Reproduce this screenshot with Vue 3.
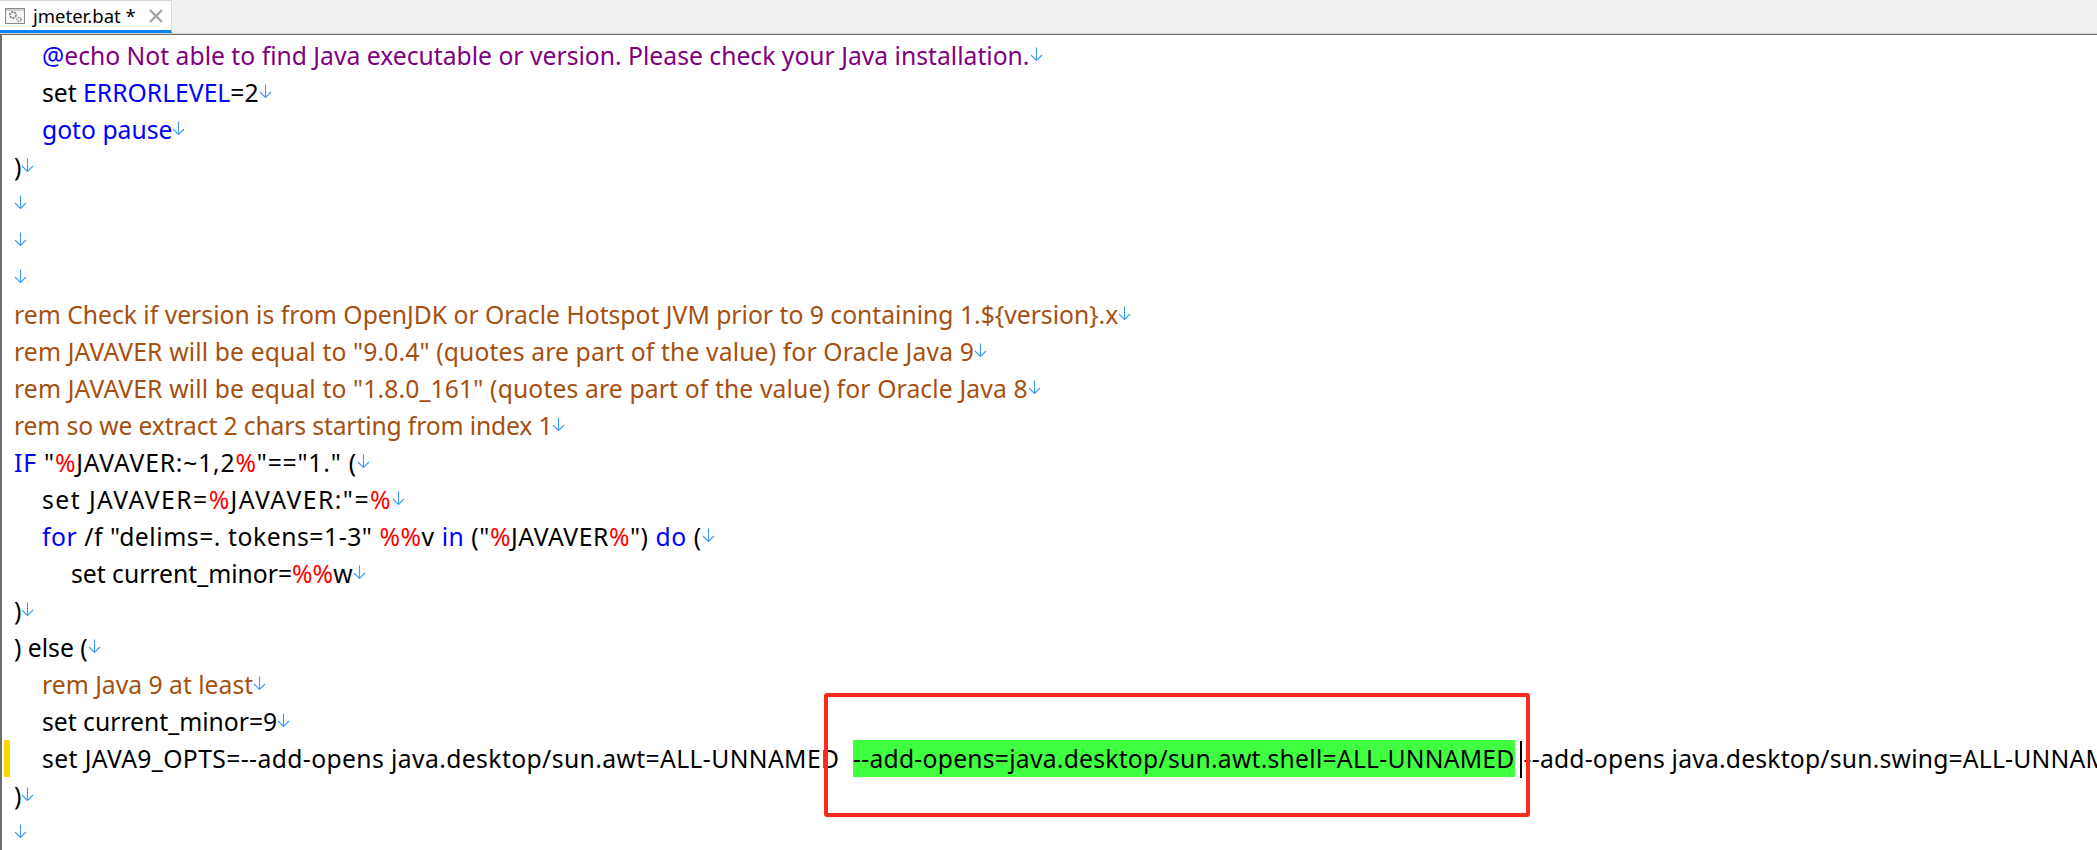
<script setup>
const lines = [
  { i: 1, s: [['@', 'k'], ['echo Not able to find Java executable or version. Please check your Java installation.', 'e']] },
  { i: 1, s: [['set ', 't'], ['ERRORLEVEL', 'k'], ['=2', 't']] },
  { i: 1, s: [['goto pause', 'k']] },
  { i: 0, s: [[')', 't']] },
  { i: 0, s: [] },
  { i: 0, s: [] },
  { i: 0, s: [] },
  { i: 0, s: [['rem Check if version is from OpenJDK or Oracle Hotspot JVM prior to 9 containing 1.${version}.x', 'c']] },
  { i: 0, cls: 'wide-rem', s: [['rem JAVAVER will be equal to "9.0.4" (quotes are part of the value) for Oracle Java 9', 'c']] },
  { i: 0, cls: 'wide-rem', s: [['rem JAVAVER will be equal to "1.8.0_161" (quotes are part of the value) for Oracle Java 8', 'c']] },
  { i: 0, cls: 'tight-rem', s: [['rem so we extract 2 chars starting from index 1', 'c']] },
  { i: 0, cls: 'wide-cond', s: [['IF', 'k'], [' "', 't'], ['%', 'v'], ['JAVAVER:~1,2', 't'], ['%', 'v'], ['"=="1." (', 't']] },
  { i: 1, cls: 'wide-set', s: [['set JAVAVER=', 't'], ['%', 'v'], ['JAVAVER:"=', 't'], ['%', 'v']] },
  { i: 1, cls: 'wide-for', s: [['for', 'k'], [' /f "delims=. tokens=1-3" ', 't'], ['%%', 'v'], ['v ', 't'], ['in', 'k'], [' ("', 't'], ['%', 'v'], ['JAVAVER', 't'], ['%', 'v'], ['") ', 't'], ['do', 'k'], [' (', 't']] },
  { i: 2, s: [['set current_minor=', 't'], ['%%', 'v'], ['w', 't']] },
  { i: 0, s: [[')', 't']] },
  { i: 0, s: [[') else (', 't']] },
  { i: 1, s: [['rem Java 9 at least', 'c']] },
  { i: 1, s: [['set current_minor=9', 't']] },
  { i: 1, mark: true, noEol: true, cls: 'opts', s: [['set JAVA9_OPTS=--add-opens java.desktop/sun.awt=ALL-UNNAMED  ', 't'], ['--add-opens=java.desktop/sun.awt.shell=ALL-UNNAMED', 'hl'], ['', 'caret'], ['--add-opens java.desktop/sun.swing=ALL-UNNAMED', 'tail']] },
  { i: 0, s: [[')', 't']] },
  { i: 0, s: [] }
]
</script>

<template>
  <div class="app">
    <div class="tabbar">
      <div class="tab">
        <svg class="fileicon" width="20" height="16" viewBox="0 0 20 16">
          <rect x="0.5" y="0.5" width="19" height="15" fill="#f4f4f4" stroke="#8a8a8a" />
          <rect x="1" y="1" width="18" height="2" fill="#cfcfcf" />
          <circle cx="8" cy="7" r="3" fill="none" stroke="#7d7d7d" stroke-width="1.8" stroke-dasharray="2 1" />
          <circle cx="14" cy="11.5" r="2" fill="none" stroke="#8d8d8d" stroke-width="1.4" stroke-dasharray="1.5 1" />
        </svg>
        <span class="tabname">jmeter.bat *</span>
        <svg class="close" width="14" height="14" viewBox="0 0 14 14">
          <path d="M1 1 13 13M13 1 1 13" stroke="#a0a0a0" stroke-width="2.2" fill="none" />
        </svg>
      </div>
    </div>
    <div class="editor">
      <div v-for="(l, n) in lines" :key="n" class="line" :class="['ind' + l.i, l.cls]">
        <i v-if="l.mark" class="mark"></i>
        <span v-for="(p, m) in l.s" :key="m" :class="p[1]">{{ p[0] }}</span>
        <svg v-if="!l.noEol" class="eol" width="13" height="14" viewBox="0 0 13 14">
          <path d="M6.5 0.5V13.5M1 8 6.5 13.5 12 8" fill="none" stroke="#3d9bf5" stroke-width="1.1" />
        </svg>
      </div>
      <div class="redbox"></div>
    </div>
  </div>
</template>

<style>
html, body { margin: 0; background: #fff; overflow: hidden; }
</style>

<style scoped>
.app { width: 2097px; height: 850px; display: flex; flex-direction: column; overflow: hidden; background: #fff; font-family: "Noto Sans", "Open Sans", sans-serif; }
.tabbar { height: 34px; box-sizing: border-box; background: #f0f0f0; border-bottom: 1px solid #d4d4d4; display: flex; flex: none; }
.tab { width: 172px; height: 33px; box-sizing: border-box; background: #fff; border: 1px solid #d8d8d8; border-bottom: 3px solid #0a84f5; border-left: 0; display: flex; align-items: center; padding-left: 5px; }
.fileicon { flex: none; }
.tabname { margin-left: 8px; font-size: 18.5px; color: #000; white-space: pre; }
.close { margin-left: 13px; flex: none; }
.editor { position: relative; flex: 1; border-left: 2px solid #6e6e6e; border-top: 1px solid #6e6e6e; padding: 2px 0 0 12px; overflow: hidden; font-size: 24.7px; }
.line { position: relative; height: 37px; line-height: 37px; white-space: pre; display: flex; align-items: center; }
.opts { letter-spacing: 0.39px; }
.opts .hl { letter-spacing: 0.24px; }
.opts .tail { letter-spacing: 0.2px; color: #000; }
.wide-rem { letter-spacing: 0.13px; }
.tight-rem { letter-spacing: -0.15px; }
.wide-cond { letter-spacing: 0.8px; }
.wide-for { letter-spacing: 0.55px; }
.wide-set { letter-spacing: 1.45px; }
.ind1 { padding-left: 28px; }
.ind2 { padding-left: 57px; }
.t { color: #000; }
.k { color: #0000ff; }
.e { color: #800080; }
.c { color: #a5500f; }
.v { color: #ff0000; }
.hl { background: #40ff40; color: #000; height: 37px; }
.caret { width: 2px; height: 37px; background: #000; margin: 2px 2px 0 5px; flex: none; }
.eol { flex: none; margin-top: -4px; }
.mark { position: absolute; left: -10px; top: 0; width: 6px; height: 37px; background: #ffd700; }
.redbox { position: absolute; left: 822px; top: 658px; width: 706px; height: 124px; box-sizing: border-box; border: 4px solid #ff2a1f; border-radius: 3px; }
</style>
